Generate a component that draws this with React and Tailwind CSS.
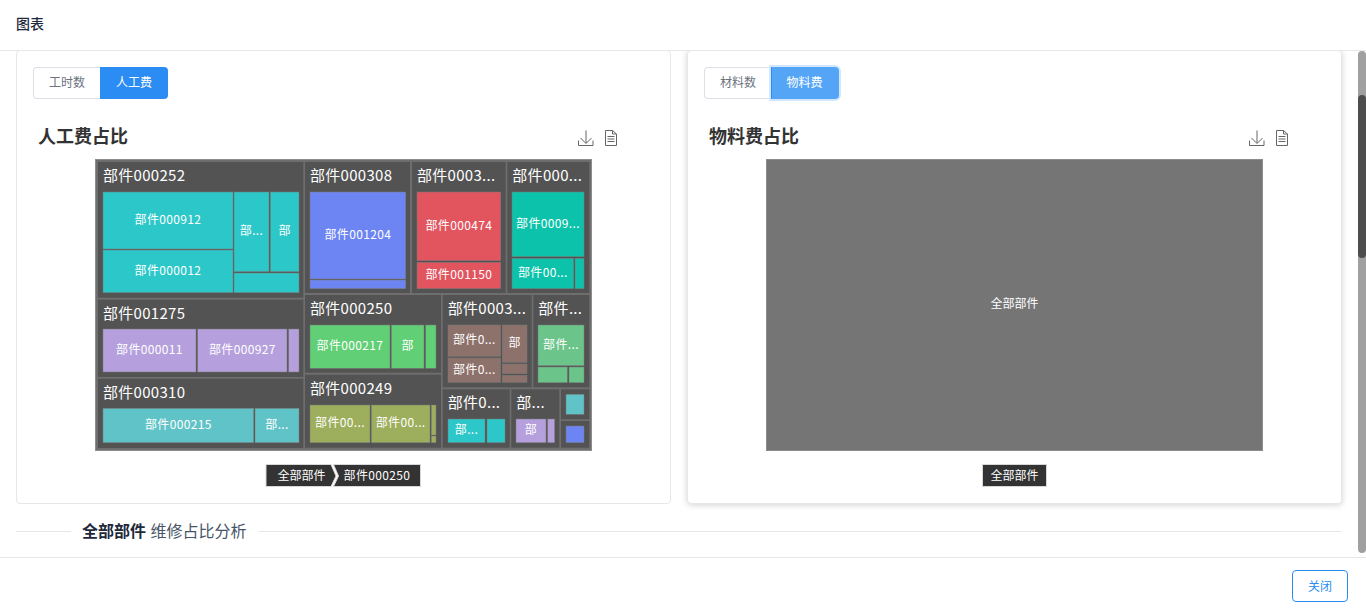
const FONT = { fontFamily: '"Noto Sans CJK SC", "Noto Sans", sans-serif' };

const TEAL = '#2cc7c9', BLUE = '#6c85f3', RED = '#e2545e', JADE = '#0cc2aa', LILAC = '#b5a0dd', CYAN = '#5fc3c7', GREEN = '#60cf75', OLIVE = '#9dae5c', BROWN = '#8d716b', MINT = '#6bc58a';

const groups = [
  { b: [98, 162, 303.3, 297.7], t: '部件000252', c: TEAL, k: [
    [103, 192, 233, 249, '部件000912'], [103, 250, 233, 292.7, '部件000012'],
    [234, 192, 269, 271.7, '部...'], [270.3, 192, 299, 271.7, '部'], [234, 273, 299, 292.7] ] },
  { b: [305, 162, 410, 293], t: '部件000308', c: BLUE, k: [
    [310, 192, 405.7, 279, '部件001204'], [310, 280, 405.7, 288.7] ] },
  { b: [412, 162, 505.7, 293], t: '部件0003...', c: RED, k: [
    [417, 192, 500.7, 260.7, '部件000474'], [417, 262.3, 500.7, 288.7, '部件001150'] ] },
  { b: [507.3, 162, 589.3, 293], t: '部件000...', c: JADE, k: [
    [512, 192, 584, 256.7, '部件0009...'], [512, 258.3, 573.7, 288.7, '部件00...'], [575, 258.3, 584, 288.7] ] },
  { b: [98, 299.7, 303.3, 377], t: '部件001275', c: LILAC, k: [
    [103, 329, 196, 372, '部件000011'], [197.7, 329, 287, 372, '部件000927'], [288.7, 329, 299, 372] ] },
  { b: [98, 378.7, 303.3, 448], t: '部件000310', c: CYAN, k: [
    [103, 408.3, 253.7, 442.7, '部件000215'], [255, 408.3, 299, 442.7, '部...'] ] },
  { b: [305, 295, 441, 372.7], t: '部件000250', c: GREEN, k: [
    [310, 325, 390, 368.3, '部件000217'], [391.3, 325, 424, 368.3, '部'], [425.7, 325, 436, 368.3] ] },
  { b: [305, 374.7, 441, 447.7], t: '部件000249', c: OLIVE, k: [
    [310, 405, 370, 442.7, '部件00...'], [371.3, 405, 430, 442.7, '部件00...'], [431.3, 405, 436, 435], [431.3, 436, 436, 442.7] ] },
  { b: [442.7, 295, 531.7, 387.3], t: '部件0003...', c: BROWN, k: [
    [448, 325, 500.7, 356.3, '部件0...'], [448, 358, 500.7, 382.3, '部件0...'], [502.3, 325, 527, 362.3, '部'], [502.3, 364, 527, 373.7], [502.3, 375.3, 527, 382.3] ] },
  { b: [533.3, 295, 589.3, 387.3], t: '部件...', c: MINT, k: [
    [538, 325, 584, 365.7, '部件...'], [538, 367, 567.3, 382.7], [569, 367, 584, 382.7] ] },
  { b: [442.7, 389.3, 509.7, 447.7], t: '部件0...', c: TEAL, k: [
    [448, 419, 485, 442.7, '部...'], [487, 419, 505, 442.7] ] },
  { b: [511.3, 389.3, 559.3, 447.7], t: '部...', c: LILAC, k: [
    [516, 419, 546, 442.7, '部'], [547.7, 419, 554.7, 442.7] ] },
  { b: [561, 389.3, 589.3, 419.3], c: CYAN, k: [[566, 394.3, 584, 414.3]] },
  { b: [561, 421, 589.3, 447.7], c: BLUE, k: [[566, 426, 584, 442.7]] },
];

function Treemap() {
  return (
    <svg width="501" height="335" viewBox="93 155 501 335" className="mx-auto block" style={FONT}>
      <rect x="95.5" y="159.5" width="496" height="291" fill="#6e6e6e" stroke="#8c8c8c" />
      {groups.map((g, i) => (
        <g key={i}>
          <rect x={g.b[0]} y={g.b[1]} width={g.b[2] - g.b[0]} height={g.b[3] - g.b[1]} fill="#535353" />
          {g.t && (
            <text x={g.b[0] + 5} y={g.b[1] + 12.5} fontSize="15" letterSpacing="0.3" fill="#fff" dominantBaseline="central">{g.t}</text>
          )}
          {g.k.map((k, j) => (
            <g key={j}>
              <rect x={k[0]} y={k[1]} width={k[2] - k[0]} height={k[3] - k[1]} fill={g.c} stroke="#7a7a7a" strokeWidth="0.5" />
              {k[4] && (
                <text x={(k[0] + k[2]) / 2} y={(k[1] + k[3]) / 2 - 2} fontSize="12" letterSpacing="0.35" fill="#fff" textAnchor="middle" dominantBaseline="central">{k[4]}</text>
              )}
            </g>
          ))}
        </g>
      ))}
      <polygon points="266,464.5 331,464.5 336,476 331,486.5 266,486.5" fill="#333" stroke="#d8d8d8" />
      <polygon points="333.5,464.5 420.5,464.5 420.5,486.5 333.5,486.5 338.5,476" fill="#333" stroke="#d8d8d8" />
      <text x="301.5" y="474.5" fontSize="12" fill="#fff" textAnchor="middle" dominantBaseline="central">全部部件</text>
      <text x="377" y="474.5" fontSize="12" letterSpacing="0.35" fill="#fff" textAnchor="middle" dominantBaseline="central">部件000250</text>
    </svg>
  );
}

function Flat() {
  return (
    <svg width="501" height="335" viewBox="764 155 501 335" className="mx-auto block" style={FONT}>
      <rect x="766.5" y="159.5" width="496" height="291" fill="#757575" stroke="#8c8c8c" />
      <text x="1014.5" y="302.5" fontSize="12" fill="#fff" textAnchor="middle" dominantBaseline="central">全部部件</text>
      <rect x="982.5" y="464.5" width="64" height="22" fill="#333" stroke="#d8d8d8" />
      <text x="1014.5" y="474.5" fontSize="12" fill="#fff" textAnchor="middle" dominantBaseline="central">全部部件</text>
    </svg>
  );
}

function Icons() {
  return (
    <div className="mt-[2px] flex items-center gap-[10px] text-[#666]">
      <svg width="16" height="16" viewBox="0 0 16 16" fill="none" stroke="currentColor" strokeWidth="1">
        <path d="M8 0.5V13M2.5 8L8 13.5L13.5 8" />
        <path d="M0.5 10.5V15.5H15V10.5" />
      </svg>
      <svg width="14" height="16" viewBox="0 0 14 16" fill="none" stroke="currentColor" strokeWidth="1">
        <path d="M1.5 0.5H8.5L12.5 4V15.5H1.5Z" />
        <path d="M8.5 0.5V4H12.5M3.5 6.5H10.5M3.5 9H10.5M3.5 11.5H10.5" />
      </svg>
    </div>
  );
}

function Card({ tabs, title, focused, shadow, children }) {
  return (
    <div className={`h-[454px] rounded border border-[#e5e7eb] bg-white p-4 ${shadow ? 'shadow-[0_1px_6px_rgba(0,0,0,0.18)]' : ''}`}>
      <div className="flex h-8 text-xs">
        <div className="flex h-8 w-[67px] items-center justify-center rounded-l border border-r-0 border-[#dcdfe6] pb-[2px] text-[#6b7280]">{tabs[0]}</div>
        <div className={`flex h-8 w-[68px] items-center justify-center rounded-r pb-[2px] text-white ${focused ? 'border-l border-[#2b8cf3] bg-[#55a5f7] pr-[2px] shadow-[0_0_0_2px_#d4e8fd]' : 'bg-[#2b8cf3]'}`}>{tabs[1]}</div>
      </div>
      <div className="ml-[5px] mt-5 flex h-9 w-[580px] items-center justify-between">
        <div className="mb-1 text-lg font-bold text-[#333]">{title}</div>
        <Icons />
      </div>
      <div className="-mx-px">{children}</div>
    </div>
  );
}

export default function App() {
  return (
    <div className="relative flex h-screen flex-col overflow-hidden bg-white" style={FONT}>
      <header className="relative z-10 flex h-[51px] shrink-0 items-center border-b border-[#e5e7eb] bg-white pb-1 pl-4 text-sm font-medium text-[#1e293b]">图表</header>
      <main className="min-h-0 flex-1 overflow-hidden pl-4 pr-6">
        <div className="-mt-px grid grid-cols-2 gap-4">
          <Card tabs={['工时数', '人工费']} title="人工费占比"><Treemap /></Card>
          <Card tabs={['材料数', '物料费']} title="物料费占比" focused shadow><Flat /></Card>
        </div>
        <div className="mt-[15px] flex h-6 items-center">
          <div className="h-px w-[55px] bg-[#e5e7eb]" />
          <div className="mx-[11px] mb-[2px] text-base text-[#475569]"><span className="mr-[1px] font-bold text-[#1e293b]">全部部件</span> 维修占比分析</div>
          <div className="h-px flex-1 bg-[#e5e7eb]" />
        </div>
      </main>
      <footer className="flex h-[57px] shrink-0 items-center justify-end border-t border-[#e5e7eb] pr-[18px]">
        <button className="h-8 w-14 rounded border border-[#2b8cf3] text-xs text-[#2b8cf3]">关闭</button>
      </footer>
      <div className="absolute right-0 top-[51px] h-[502px] w-2 rounded-full bg-[#a0a0a0]">
        <div className="mt-[44px] h-[163px] w-2 rounded-full bg-[#4d4d4d]" />
      </div>
    </div>
  );
}
